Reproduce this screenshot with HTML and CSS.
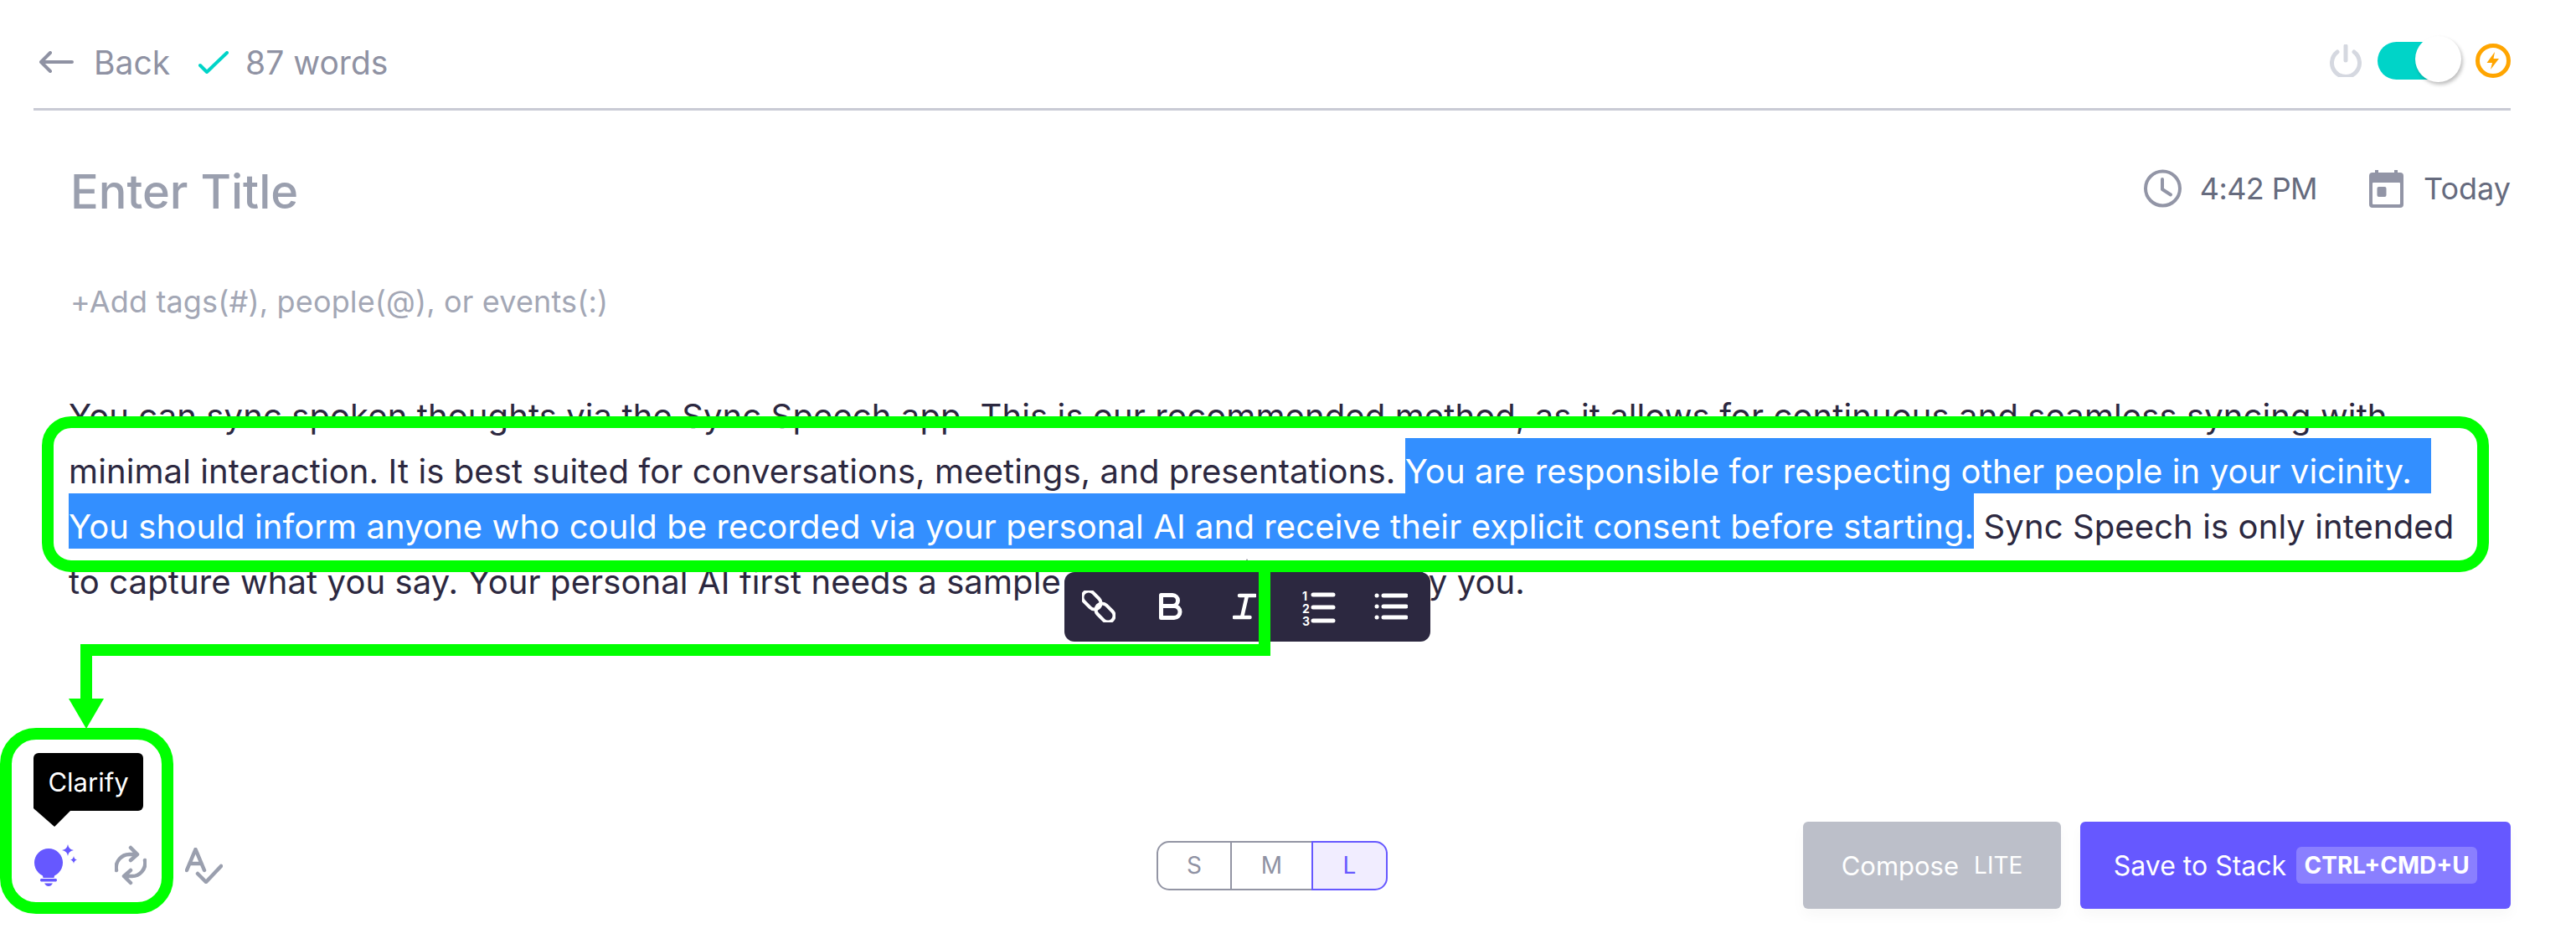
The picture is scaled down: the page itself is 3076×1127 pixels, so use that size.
FILE: index.html
```html
<!DOCTYPE html>
<html lang="en">
  <head>
    <meta charset="UTF-8" />
    <title>Editor</title>
    <link rel="stylesheet" href="styles.css">
  </head>
  <body>
    <div class="page">
      <header class="topbar">
        <div class="topbar-left">
          <svg class="icon-back" viewBox="0 0 41 26"><path d="M39 13H3M13 2L2 13l11 11" /></svg>
          <span class="back-text">Back</span>
          <svg class="icon-check" viewBox="0 0 36 27"><path d="M2 17l8 8L34 2" /></svg>
          <span class="words">87 words</span>
        </div>
        <div class="topbar-right">
          <svg class="icon-power" viewBox="0 0 38 39"><path d="M9 9a16.5 16.5 0 1 0 20 0M19 2v17" /></svg>
          <div class="toggle"><div class="knob"></div></div>
          <svg class="icon-bolt" viewBox="0 0 42 41"><ellipse cx="21" cy="20.5" rx="18.5" ry="18" /><path class="bolt" d="M23 10L13.5 23H20l-2 8 10-13h-6.500z" /></svg>
        </div>
      </header>

      <main class="note">
        <div class="title-row">
          <div class="title">Enter Title</div>
          <div class="meta">
            <svg class="icon-clock" viewBox="0 0 45 46"><circle cx="22.500" cy="23" r="20.500" /><path d="M22 12v12l10 6.500" /></svg>
            <span class="meta-time">4:42 PM</span>
            <svg class="icon-cal" viewBox="0 0 41 45"><path d="M9 0v5M32 0v5" class="peg" /><rect x="0" y="3" width="41" height="42" rx="4" class="cal-body" /><rect x="4" y="15" width="33" height="26" rx="1" class="cal-inner" /><rect x="9.500" y="20" width="11" height="12" rx="2" class="cal-body" /></svg>
            <span>Today</span>
          </div>
        </div>
        <div class="tags">+Add tags(#), people(@), or events(:)</div>

        <div class="body-text">
          <div class="line">You can sync spoken thoughts via the Sync Speech app. This is our recommended method, as it allows for continuous and seamless syncing with</div>
          <div class="line">minimal interaction. It is best suited for conversations, meetings, and presentations. <span class="sel">You are responsible for respecting other people in your vicinity.  </span></div>
          <div class="line"><span class="sel">You should inform anyone who could be recorded via your personal AI and receive their explicit consent before starting.</span> Sync Speech is only intended</div>
          <div class="line">to capture what you say. Your personal AI first needs a sample of your voice to identify you.</div>
        </div>
      </main>

      <footer class="footer">
        <div class="tools">
          <div class="tooltip">Clarify</div>
          <svg class="icon-bulb" viewBox="0 0 51 50">
            <circle cx="17" cy="22" r="17" />
            <path d="M9 33h16l-1.500 7h-13z" />
            <path d="M8 41h18a2 2 0 0 1 0 3.500H8a2 2 0 0 1 0-3.500zM12 46.500h10q-2 3.500-5 3.500t-5-3.500z" />
            <path d="M40 0q1 6 7 7-6 1-7 7-1-6-7-7 6-1 7-7zM47 14q.7 4 4 4.500-3.300.5-4 4.500-.7-4-4-4.500 3.300-.5 4-4.500z" />
          </svg>
          <svg class="icon-sync" viewBox="0 0 38 48"><path d="M2 30c-2-10 6-20 17-19h8M19 3l8 8-8 7M36 18c2 10-6 20-17 19h-8M19 30l-8 7 8 8" /></svg>
          <svg class="icon-spell" viewBox="0 0 45 43"><path d="M2 27L12.500 2 23 27M6 19h13M15 31l10 10 18-19" /></svg>
        </div>
        <div class="sizes">
          <div class="size size-s">S</div>
          <div class="size size-m">M</div>
          <div class="size size-l">L</div>
        </div>
        <div class="actions">
          <button class="btn btn-compose">Compose<small>LITE</small></button>
          <button class="btn btn-save">Save to Stack<span class="chip">CTRL+CMD+U</span></button>
        </div>
      </footer>
    </div>

    <div class="format-bar">
      <svg class="fmt-link" viewBox="0 0 40 38">
        <rect x="-1" y="4" width="25" height="15" rx="7.500" transform="rotate(45 11.500 11.500)" />
        <rect x="15" y="19" width="25" height="15" rx="7.500" transform="rotate(45 27.500 26.500)" />
      </svg>
      <svg class="fmt-b" viewBox="0 0 28 32"><path d="M2.500 2.500H16a6.500 6.500 0 0 1 0 13H2.500M16 15.500h2a7 7 0 0 1 0 14H2.500V2.500" /></svg>
      <svg class="fmt-i" viewBox="0 0 28 32"><path d="M8 3h19M1.500 29h19M17 3l-6 26" /></svg>
      <svg class="fmt-ol" viewBox="0 0 40 45">
        <text x="0" y="13">1</text><text x="0" y="28">2</text><text x="0" y="43">3</text>
        <path d="M13 6h24M13 21h24M13 37h24" />
      </svg>
      <svg class="fmt-ul" viewBox="0 0 40 32"><path d="M3 3h.1M3 16h.1M3 29h.1M11 3h27M11 16h27M11 29h27" /></svg>
    </div>

    <svg class="marks" viewBox="0 0 3076 1127">
      <rect x="57" y="504" width="2908" height="172" rx="28" />
      <rect x="7" y="876" width="193" height="208" rx="36" />
      <path d="M1510 683V776H103V836" />
      <polygon points="82,834 124,834 103,870" />
    </svg>
  </body>
</html>
```

FILE: styles.css
```css
body {
  margin: 0;
  background-color: #fff;
  font-family: Inter, "Liberation Sans", sans-serif;
  color: #2c2840;
  position: relative;
  height: 1127px;
  overflow: hidden;
}

svg {
  display: block;
  flex: none;
  fill: none;
}

.page {
  margin: 0 78px 0 40px;
}

.topbar {
  height: 129px;
  border-bottom: 3px solid #c9cbd5;
  display: flex;
  justify-content: space-between;
  align-items: center;
}

.topbar-left {
  display: flex;
  align-items: center;
  padding-left: 7px;
  padding-top: 19px;
  font-size: 39px;
  color: #8f92a3;
}

.icon-back {
  width: 41px;
  height: 26px;
  stroke: #8f92a3;
  stroke-width: 4;
  stroke-linecap: round;
  stroke-linejoin: round;
}

.back-text {
  margin-left: 24px;
}

.icon-check {
  width: 36px;
  height: 27px;
  margin-left: 34px;
  stroke: #00d4c8;
  stroke-width: 4;
  stroke-linecap: round;
  stroke-linejoin: round;
}

.words {
  margin-left: 20px;
}

.topbar-right {
  display: flex;
  align-items: center;
  padding-top: 16px;
}

.icon-power {
  width: 38px;
  height: 39px;
  stroke: #d5d8e0;
  stroke-width: 5;
  stroke-linecap: round;
}

.toggle {
  width: 96px;
  height: 45px;
  margin-left: 19px;
  border-radius: 23px;
  background-color: #00d4c8;
  position: relative;
}

.knob {
  position: absolute;
  top: -7px;
  right: -4px;
  width: 55px;
  height: 55px;
  border-radius: 50%;
  background-color: #fff;
  box-shadow: 2px 3px 4px rgba(0, 0, 0, 0.25);
}

.icon-bolt {
  width: 42px;
  height: 41px;
  margin-left: 21px;
  stroke: #ffa500;
  stroke-width: 5;
}

.icon-bolt .bolt {
  fill: #ffa500;
  stroke: none;
}

.note {
  padding-top: 65px;
  padding-left: 44px;
}

.title-row {
  display: flex;
  justify-content: space-between;
  align-items: center;
  height: 64px;
}

.title {
  font-size: 56px;
  color: #9a9fae;
  font-weight: 500;
}

.meta {
  display: flex;
  align-items: center;
  font-size: 36px;
  color: #666b7e;
  padding-bottom: 8px;
}

.icon-clock {
  width: 45px;
  height: 46px;
  stroke: #9295a6;
  stroke-width: 4;
  stroke-linecap: round;
  stroke-linejoin: round;
}

.meta-time {
  margin-left: 22px;
  margin-right: 62px;
  letter-spacing: -0.6px;
}

.icon-cal {
  width: 41px;
  height: 45px;
  margin-right: 24px;
}

.cal-body {
  fill: #9295a6;
}

.cal-inner {
  fill: #fff;
}

.peg {
  stroke: #9295a6;
  stroke-width: 4;
}

.tags {
  margin-top: 77px;
  line-height: 44px;
  font-size: 36px;
  letter-spacing: 0.15px;
  color: #a3a7b5;
}

.body-text {
  margin-top: 75px;
  margin-left: -2px;
  margin-right: -80px;
  font-size: 40px;
  letter-spacing: 0.1px;
}

.line {
  height: 66px;
  padding-top: 14px;
  line-height: 52px;
  box-sizing: border-box;
  white-space: pre;
}

.sel {
  display: inline-block;
  margin-top: -14px;
  padding-top: 14px;
  color: #fff;
  background-color: #338fff;
}

.footer {
  margin-top: 260px;
  height: 104px;
  display: grid;
  grid-template-columns: 1fr auto 1fr;
  align-items: center;
}

.tools {
  display: flex;
  align-items: center;
  padding-left: 1px;
  position: relative;
}

.tooltip {
  position: absolute;
  left: 0;
  top: -109px;
  width: 131px;
  height: 69px;
  line-height: 69px;
  text-align: center;
  font-size: 31px;
  color: #fff;
  background-color: #000;
  border-radius: 6px;
}

.tooltip::after {
  content: "";
  position: absolute;
  left: 0;
  top: 60px;
  width: 44px;
  height: 28px;
  background-color: #000;
  clip-path: polygon(0 0, 100% 0, 100% 32%, 57% 100%, 0 21%);
}

.icon-bulb {
  width: 51px;
  height: 50px;
}

.icon-bulb path,
.icon-bulb circle {
  fill: #6658ff;
}

.icon-sync {
  width: 38px;
  height: 48px;
  margin-left: 45px;
  stroke: #9a9fae;
  stroke-width: 4.500;
  stroke-linecap: round;
  stroke-linejoin: round;
}

.icon-spell {
  width: 45px;
  height: 43px;
  margin-left: 46px;
  stroke: #9a9fae;
  stroke-width: 4.500;
  stroke-linecap: round;
  stroke-linejoin: round;
}

.sizes {
  display: flex;
  height: 59px;
  font-size: 28px;
  color: #8f92a3;
}

.size {
  box-sizing: border-box;
  display: flex;
  align-items: center;
  justify-content: center;
  border: 2px solid #9395a4;
}

.size-s {
  width: 90px;
  border-radius: 15px 0 0 15px;
}

.size-m {
  width: 95px;
  border-left: 0;
  border-right: 0;
}

.size-l {
  width: 91px;
  color: #6658ff;
  border-color: #6658ff;
  background-color: #f1edff;
  border-radius: 0 15px 15px 0;
}

.actions {
  display: flex;
  justify-content: flex-end;
  gap: 23px;
}

.btn {
  height: 104px;
  padding: 0;
  border: none;
  border-radius: 6px;
  font-family: inherit;
  font-size: 32px;
  color: #fff;
  display: flex;
  align-items: center;
  justify-content: center;
  box-shadow: 0 8px 16px rgba(0, 0, 0, 0.03);
}

.btn-compose {
  width: 308px;
  background-color: #bcbfc9;
  font-size: 31px;
}

.btn-compose small {
  font-size: 28px;
  margin-left: 18px;
}

.btn-save {
  width: 514px;
  background-color: #6658ff;
}

.chip {
  margin-left: 12px;
  width: 216px;
  height: 44px;
  line-height: 44px;
  border-radius: 6px;
  background-color: #8a7fff;
  font-size: 28px;
  font-weight: 700;
}

.format-bar {
  position: absolute;
  left: 1271px;
  top: 683px;
  width: 437px;
  height: 83px;
  border-radius: 12px;
  background-color: #2c2840;
}

.format-bar::before {
  content: "";
  position: absolute;
  left: 213px;
  top: -16px;
  border: 5px solid transparent;
  border-top: 0;
  border-bottom: 16px solid #2c2840;
}

.format-bar svg {
  position: absolute;
  stroke: #fff;
  stroke-linecap: round;
  stroke-linejoin: round;
}

.fmt-link {
  left: 21px;
  top: 22px;
  width: 40px;
  height: 38px;
  stroke-width: 4;
}

.fmt-b {
  left: 113px;
  top: 25px;
  width: 28px;
  height: 32px;
  stroke-width: 5;
}

.fmt-i {
  left: 201px;
  top: 25px;
  width: 28px;
  height: 32px;
  stroke-width: 4.500;
}

.fmt-ol {
  left: 284px;
  top: 21px;
  width: 40px;
  height: 45px;
  stroke-width: 5;
}

.fmt-ol text {
  font-size: 14px;
  font-weight: 700;
  fill: #fff;
  stroke: none;
}

.fmt-ul {
  left: 370px;
  top: 25px;
  width: 40px;
  height: 32px;
  stroke-width: 5;
}

.marks {
  position: absolute;
  left: 0;
  top: 0;
  width: 3076px;
  height: 1127px;
  stroke: #00ff00;
  stroke-width: 14;
}

.marks polygon {
  fill: #00ff00;
  stroke: none;
}
```
